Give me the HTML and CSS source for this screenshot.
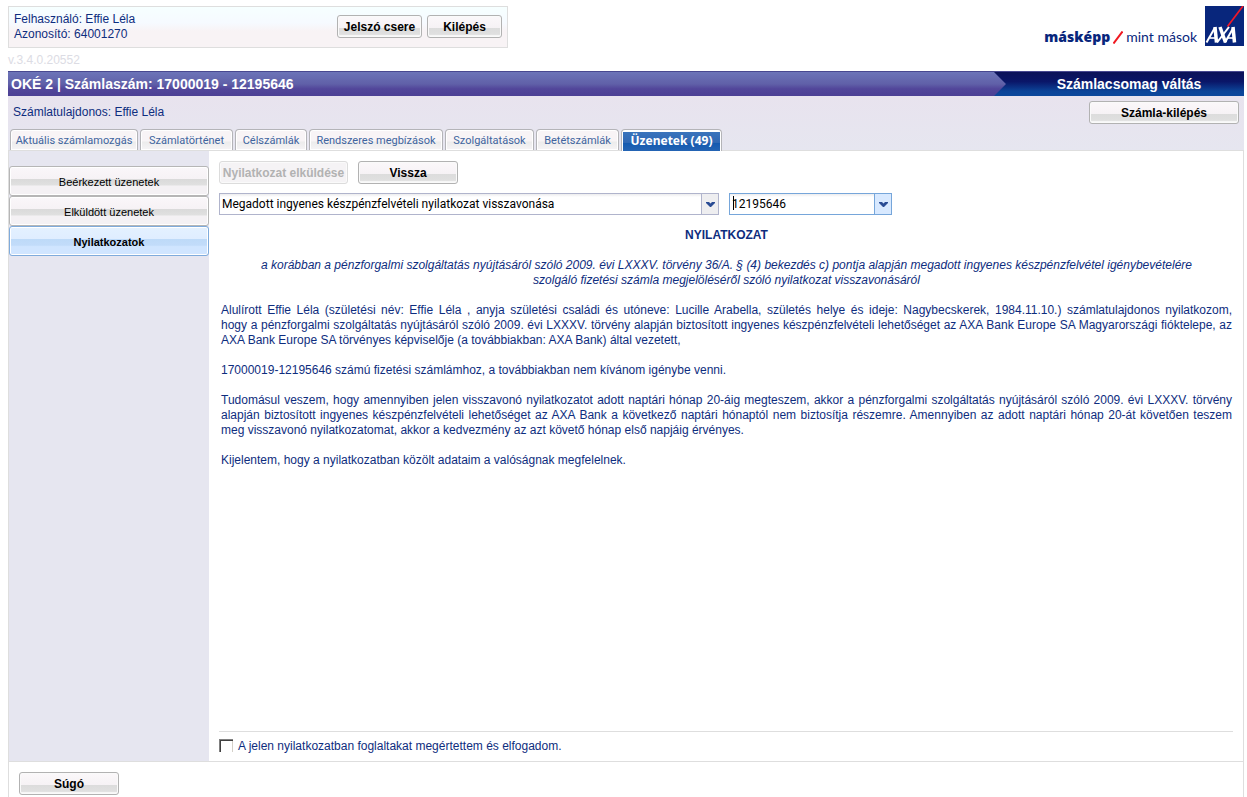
FILE: index.html
```html
<!DOCTYPE html>
<html lang="hu">
<head>
<meta charset="utf-8">
<title>AXA Bank – Nyilatkozatok</title>
<link rel="stylesheet" href="styles.css">
</head>
<body>
<header class="top">
  <div class="user-box">
    <div class="user-info">Felhasználó: Effie Léla<br>Azonosító: 64001270</div>
    <button type="button" class="btn btn-user">Jelszó csere</button>
    <button type="button" class="btn btn-exit">Kilépés</button>
  </div>
  <div class="brand">
    <span class="slogan"><b>másképp</b><svg class="slash" viewBox="0 0 10 13" width="10" height="13"><path d="M0.5 12.5 9.5 0.5" stroke="#f01820" stroke-width="2"/></svg><span>mint mások</span></span>
    <svg class="logo" viewBox="0 0 39 40" width="39" height="40" role="img" aria-label="AXA">
      <rect width="39" height="40" fill="#08267c"/>
      <path d="M38 0 22.500 20.500" stroke="#f01828" stroke-width="1.7"/>
      <g fill="none" stroke="#fff">
        <path d="M1.500 36.500 10 21.500" stroke-width="2"/>
        <path d="M10 21 11.500 36.500" stroke-width="3.500"/>
        <path d="M5 32H11" stroke-width="1.600"/>
        <path d="M15 21 20.500 36.500" stroke-width="3.500"/>
        <path d="M24 21 12 36.500" stroke-width="2"/>
        <path d="M20 36.500 28.500 21.500" stroke-width="2"/>
        <path d="M28 21 29.500 36.500" stroke-width="3.500"/>
        <path d="M23 32H29" stroke-width="1.600"/>
      </g>
    </svg>
  </div>
</header>
<div class="version">v.3.4.0.20552</div>

<div class="bar">
  <h1 class="bar-title">OKÉ 2 | Számlaszám: 17000019 - 12195646</h1>
  <a class="bar-switch" href="#">Számlacsomag váltás</a>
</div>

<div class="subhead">
  <div class="owner-row">
    <span class="owner">Számlatulajdonos: Effie Léla</span>
    <button type="button" class="btn btn-account">Számla-kilépés</button>
  </div>
  <nav class="tabs">
    <a class="tab tab-1" href="#">Aktuális számlamozgás</a>
    <a class="tab tab-2" href="#">Számlatörténet</a>
    <a class="tab tab-3" href="#">Célszámlák</a>
    <a class="tab tab-4" href="#">Rendszeres megbízások</a>
    <a class="tab tab-5" href="#">Szolgáltatások</a>
    <a class="tab tab-6" href="#">Betétszámlák</a>
    <a class="tab tab-7 active" href="#" aria-current="page"><span>Üzenetek (49)</span></a>
  </nav>
</div>

<main class="panel">
  <aside class="side">
    <button type="button" class="side-btn">Beérkezett üzenetek</button>
    <button type="button" class="side-btn">Elküldött üzenetek</button>
    <button type="button" class="side-btn selected">Nyilatkozatok</button>
  </aside>
  <section class="content">
    <div class="actions">
      <button type="button" class="btn btn-send" disabled>Nyilatkozat elküldése</button>
      <button type="button" class="btn btn-std">Vissza</button>
    </div>
    <div class="filters">
      <div class="combo combo-type">
        <select aria-label="Nyilatkozat típusa"><option>Megadott ingyenes készpénzfelvételi nyilatkozat visszavonása</option></select>
        <span class="arrow"><svg viewBox="0 0 9 5" width="9" height="5"><path d="M0 0H3L4.500 1.500 6 0H9V1L5 5H4L0 1Z" fill="#2a4c94"/></svg></span>
      </div>
      <div class="combo combo-account focused">
        <select aria-label="Számlaszám"><option>12195646</option></select>
        <span class="caret"></span>
        <span class="arrow"><svg viewBox="0 0 9 5" width="9" height="5"><path d="M0 0H3L4.500 1.500 6 0H9V1L5 5H4L0 1Z" fill="#2a4c94"/></svg></span>
      </div>
    </div>
    <article class="statement">
      <h2>NYILATKOZAT</h2>
      <p class="subject">a korábban a pénzforgalmi szolgáltatás nyújtásáról szóló 2009. évi LXXXV. törvény 36/A. § (4) bekezdés c) pontja alapján megadott ingyenes készpénzfelvétel igénybevételére szolgáló fizetési számla megjelöléséről szóló nyilatkozat visszavonásáról</p>
      <p>Alulírott Effie Léla (születési név: Effie Léla , anyja születési családi és utóneve: Lucille Arabella, születés helye és ideje: Nagybecskerek, 1984.11.10.) számlatulajdonos nyilatkozom, hogy&nbsp;a&nbsp;pénzforgalmi szolgáltatás nyújtásáról szóló 2009. évi LXXXV. törvény alapján biztosított ingyenes készpénzfelvételi lehetőséget az AXA Bank Europe SA Magyarországi fióktelepe, az AXA Bank Europe SA törvényes képviselője (a továbbiakban: AXA Bank) által vezetett,</p>
      <p>17000019-12195646 számú fizetési számlámhoz, a továbbiakban nem kívánom igénybe venni.</p>
      <p>Tudomásul veszem, hogy amennyiben jelen visszavonó nyilatkozatot adott naptári hónap 20-áig megteszem, akkor a pénzforgalmi szolgáltatás nyújtásáról szóló 2009. évi LXXXV. törvény alapján biztosított ingyenes készpénzfelvételi lehetőséget az AXA Bank a következő naptári hónaptól nem biztosítja részemre. Amennyiben az adott naptári hónap 20-át követően teszem meg visszavonó nyilatkozatomat, akkor a kedvezmény az azt követő hónap első napjáig érvényes.</p>
      <p>Kijelentem, hogy a nyilatkozatban közölt adataim a valóságnak megfelelnek.</p>
    </article>
    <label class="accept"><input type="checkbox"><span>A jelen nyilatkozatban foglaltakat megértettem és elfogadom.</span></label>
  </section>
</main>

<footer class="foot">
  <button type="button" class="btn btn-std">Súgó</button>
</footer>
</body>
</html>
```
FILE: styles.css
```css
* { box-sizing: border-box; }

body {
  margin: 0;
  padding: 6px 3px 0 8px;
  min-height: 100vh;
  display: flex;
  flex-direction: column;
  background: #fff;
  color: #0e2d7e;
  font: 12px/15px "Liberation Sans", Arial, sans-serif;
}

a { text-decoration: none; }

/* Header */
.top { display: flex; justify-content: space-between; }

.user-box {
  width: 500px;
  padding: 5px;
  border: 1px solid #dedede;
  background: linear-gradient(#f6ffff, #f6faff 40%, #f8f3f5 60%, #f8f3f5);
  display: flex;
  align-items: flex-start;
  gap: 5px;
}
.user-info { flex: 1; }
.user-box .btn { margin-top: 3px; }

.btn {
  height: 23px;
  padding: 2px 2px 0;
  border: 1px solid #b2b2b2;
  border-radius: 3px;
  box-shadow: inset 0 0 0 1px #fafafa;
  background: linear-gradient(#fbf8fa, #f6f2f5 56%, #dcdcdc 57%, #e0e0e0 88%, #f6f6f6 89%);
  color: #000;
  font: bold 12px/15px "Liberation Sans", Arial, sans-serif;
  white-space: nowrap;
}
.btn:disabled { border-color: #dcdcdc; background: #f5f3f5; color: #b2b2b2; }
.btn-user { width: 85px; }
.btn-exit { width: 75px; }
.btn-account { width: 150px; }
.btn-send { width: 129px; }
.btn-std { width: 100px; }

.brand { display: flex; gap: 8px; }
.slogan {
  padding-top: 22px;
  display: flex;
  align-items: flex-start;
  gap: 3px;
  color: #08267c;
  font: 14px/18px Lato, sans-serif;
}
.slogan b { font: 800 14px/18px "Open Sans", sans-serif; }
.slash { margin-top: 3px; }
.logo { display: block; }

.version { padding-top: 5px; height: 23px; color: #dcdce4; }

/* Account bar */
.bar {
  height: 25px;
  border-top: 1px solid #484890;
  background: linear-gradient(#6c74b8, #6060a8 50%, #52469a 70%, #4c4094);
  display: flex;
  justify-content: space-between;
  color: #fff;
  font: bold 14px/24px "Liberation Sans", Arial, sans-serif;
}
.bar-title { margin: 0; padding-left: 3px; font: inherit; }
.bar-switch {
  width: 250px;
  padding-left: 20px;
  background: linear-gradient(#0c1258, #0a1668 40%, #0c4498 80%, #0c489c);
  clip-path: polygon(0 0, 100% 0, 100% 100%, 0 100%, 12px 50%);
  color: #fff;
  text-align: center;
}

.subhead { background: linear-gradient(#e8e3ee, #e6e6f0); border-bottom: 1px solid #dedede; }
.owner-row { height: 33px; padding: 5px 5px 0; display: flex; justify-content: space-between; align-items: flex-start; }
.owner { padding-top: 4px; }

.tabs { padding-left: 2px; display: flex; gap: 2px; }
.tab {
  height: 21px;
  border: 1px solid #b4b4b8;
  border-bottom: 0;
  border-radius: 4px 4px 0 0;
  box-shadow: inset 0 0 0 1px #fff;
  background: linear-gradient(#f8f4f6 55%, #ececec 60%, #f6f4f6);
  color: #40649e;
  font: 11px/21px Roboto, Tahoma, sans-serif;
  text-align: center;
  white-space: nowrap;
}
.tab-1 { width: 128px; }
.tab-2 { width: 93px; }
.tab-3 { width: 72px; }
.tab-4 { width: 134px; }
.tab-5 { width: 89px; }
.tab-6 { width: 83px; }
.tab-7 { width: 101px; }
.tab.active {
  height: 22px;
  margin-bottom: -1px;
  padding: 2px 1px 0;
  background: #fff;
  color: #fff;
  font: bold 12px/17px "Noto Sans", Tahoma, sans-serif;
}
.tab.active span { display: block; height: 19px; background: linear-gradient(#3a74bc, #3068b4 55%, #145ab0 60%, #2464b4); }

/* Main panel */
.panel { flex: 1; display: flex; border: solid #dedede; border-width: 0 1px 1px; }
.side { width: 200px; padding-top: 15px; background: #e6e6f0; display: flex; flex-direction: column; }
.side-btn {
  height: 30px;
  padding: 2px 6px 0;
  border: 1px solid #b6b6b6;
  border-radius: 3px;
  box-shadow: inset 0 0 0 1px #fff;
  background: linear-gradient(#faf7fa, #f6f2f5 43%, #dadada 44%, #e0e0e0 64%, #f4f1f4 68%);
  color: #000;
  font: 11px/15px "Liberation Sans", Arial, sans-serif;
}
.side-btn.selected {
  border-color: #7fabdc;
  background: linear-gradient(#e4f1ff, #dfedff 43%, #bedaf8 44%, #c2dcfa 65%, #d0e5ff 70%);
  font-weight: bold;
}

.content { flex: 1; min-width: 0; padding: 10px 10px 7px; display: flex; flex-direction: column; }
.actions, .filters { display: flex; gap: 10px; }
.filters { margin-top: 9px; }

.combo { position: relative; display: flex; border: 1px solid #b0b4cc; background: #fff; }
.combo select {
  appearance: none;
  flex: 1;
  min-width: 0;
  height: 20px;
  margin: 0;
  padding: 0 20px 0 2px;
  border: 0;
  outline: 0;
  background: linear-gradient(#ececee, #fff 3px);
  color: #000;
  font: 12px/20px Roboto, Tahoma, sans-serif;
}
.combo-type { width: 500px; }
.combo-account { width: 163px; }
.arrow {
  position: absolute;
  inset: 0 0 0 auto;
  width: 17px;
  border-left: 1px solid #b0b4cc;
  background: #eeeef0;
  display: flex;
  align-items: center;
  justify-content: center;
  pointer-events: none;
}
.focused, .focused .arrow { border-color: #76a6da; }
.focused .arrow { background: #d8e9ff; }
.caret { position: absolute; left: 3px; top: 2px; width: 1px; height: 14px; background: #000; }

.statement { flex: 1; padding: 13px 1px 0 2px; }
.statement h2 { margin: 0; font: bold 12px/15px "Liberation Sans", Arial, sans-serif; text-align: center; }
.statement p { margin: 15px 0 0; text-align: justify; }
.statement .subject { padding: 0 20px; font-style: italic; text-align: center; }

.accept { border-top: 1px solid #dedede; padding-top: 7px; display: flex; align-items: flex-start; gap: 5px; }
.accept input {
  appearance: none;
  width: 14px;
  height: 13px;
  margin: 0;
  border: solid #808080;
  border-width: 1px 0 0 1px;
  box-shadow: inset 1px 1px #404040, inset -1px 0 #d4d0c8;
  background: #fff;
}

.foot { height: 35px; padding: 10px 10px 0; border: solid #dedede; border-width: 0 1px; }
```
